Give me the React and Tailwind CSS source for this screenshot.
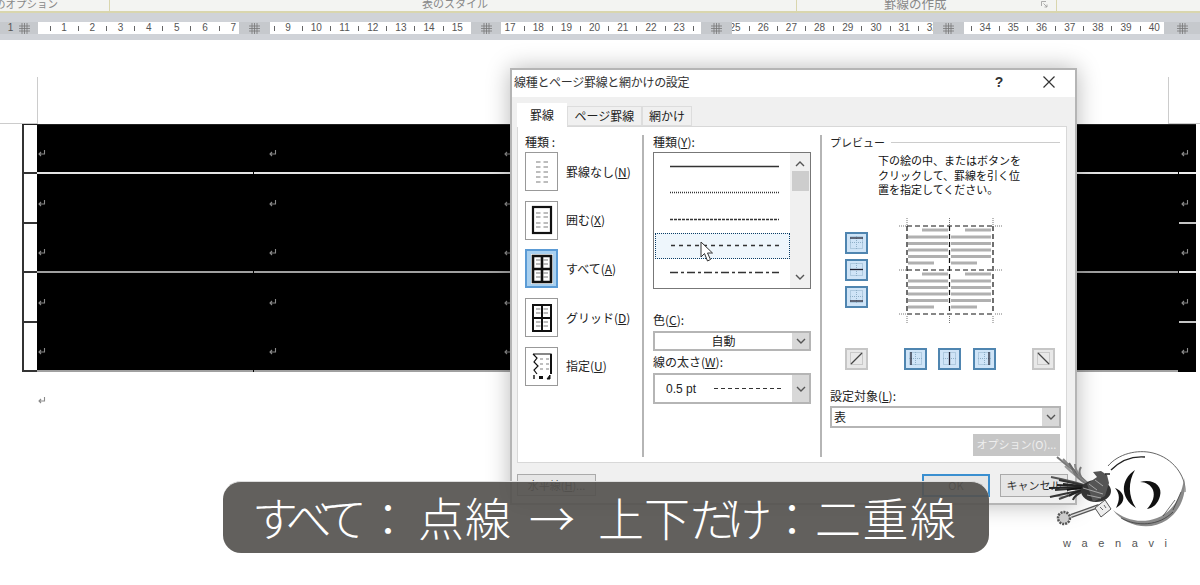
// Word の線種とページ罫線ダイアログの画面
const JP = "font-['Noto_Sans_CJK_JP','Noto_Sans',sans-serif]";

// ruler segments: "" is a tick, pad is where the first item starts
const rulerParts = [
  { gray: true, cls: "w-[38px]", items: ["1"] },
  { cls: "w-[201px]", pad: "ml-[5px]", items: ["", "1", "", "2", "", "3", "", "4", "", "5", "", "6", "", "7"] },
  { gray: true, cls: "w-[31px]", items: [] },
  { cls: "w-[201px]", pad: "-ml-[3px]", items: ["", "9", "", "10", "", "11", "", "12", "", "13", "", "14", "", "15", ""] },
  { gray: true, cls: "w-[30px]", items: [] },
  { cls: "w-[200px]", pad: "ml-[2px]", items: ["17", "", "18", "", "19", "", "20", "", "21", "", "22", "", "23", ""] },
  { gray: true, cls: "w-[31px]", items: [] },
  { cls: "w-[201px]", pad: "-ml-[4px]", items: ["25", "", "26", "", "27", "", "28", "", "29", "", "30", "", "31", "", "32"] },
  { gray: true, cls: "w-[31px]", items: [] },
  { cls: "w-[200px]", pad: "ml-0", items: ["", "34", "", "35", "", "36", "", "37", "", "38", "", "39", "", "40"] },
  { gray: true, cls: "flex-1", items: [""] },
];

function GridMark() {
  return (
    <svg width="11" height="11" viewBox="0 0 11 11" fill="none" className="shrink-0">
      <path d="M3 0v11M5.5 0v11M8 0v11M0 3h11M0 5.5h11M0 8h11" stroke="#777" strokeWidth="0.8" />
    </svg>
  );
}

function Ribbon() {
  return (
    <div className="h-[40px] bg-[#d0d3d8]">
      <div className={`flex h-[13px] overflow-hidden border-b-2 border-[#d9d6ae] bg-[#f3f4f2] text-[11px] leading-[7px] text-[#888] ${JP}`}>
        <div className="w-[110px] overflow-hidden whitespace-nowrap border-r border-[#d9d6ae]">
          <div className="-ml-[5px] text-[10.5px]">のオプション</div>
        </div>
        <div className="w-[687px] border-r border-[#d9d6ae] pl-[4px] text-center">表のスタイル</div>
        <div className="flex w-[260px] border-r border-[#d9d6ae]">
          <span className="ml-[87px] flex-1 text-[12.5px]">罫線の作成</span>
          <svg width="7" height="7" viewBox="0 0 7 7" fill="none" className="mr-[8px] mt-px">
            <path d="M0.5 5V0.5H5M2.5 2.5L6 6M6 3.5V6H3.5" stroke="#999" strokeWidth="0.8" />
          </svg>
        </div>
        <div className="flex-1" />
      </div>
      <div className="mt-[9px] flex h-[12px] font-['Liberation_Sans',sans-serif] text-[10px] leading-[12px] text-[#555]">
        {rulerParts.map((part, i) =>
          part.gray ? (
            <div key={i} className={`flex items-center justify-center gap-[6px] bg-[#c6c9cd] ${part.cls}`}>
              {part.items[0] && <span>{part.items[0]}</span>}
              <GridMark />
            </div>
          ) : (
            <div key={i} className={`flex items-center overflow-hidden bg-white ${part.cls}`}>
              <div className={`flex items-center ${part.pad}`}>
                {part.items.map((t, j) => (
                  <span key={j} className="flex w-[14.1px] shrink-0 items-center justify-center">
                    {t === "" ? <span className="h-[5px] w-px bg-[#666]" /> : t}
                  </span>
                ))}
              </div>
            </div>
          ),
        )}
      </div>
    </div>
  );
}

function Ret({ className = "" }) {
  return (
    <svg width="9" height="9" viewBox="0 0 9 9" fill="none" className={`shrink-0 ${className}`}>
      <path d="M7.5 1v4H2M4 3L2 5l2 2" stroke="#8a8a8a" strokeWidth="1.1" />
    </svg>
  );
}

const tableRows = [
  { line: "border-b-[#e4e4e4]", end: "border-b-[#eeeeee]" },
  { line: "border-b-black", end: "border-b-[#c4c4c4]" },
  { line: "border-b-[#a0a0a0]", end: "border-b-[#e4e4e4]" },
  { line: "border-b-black", end: "border-b-[#c4c4c4]" },
  { line: "border-b-[#a0a0a0]", end: "border-b-black" },
];

function Table() {
  return (
    <div className="ml-[22px] flex w-[1174px] flex-col border-t border-[#222]">
      {tableRows.map((r, i) => (
        <div key={i} className="flex h-[49.4px]">
          <div className="w-[15px] border-b-2 border-l-2 border-[#333] bg-white" />
          <div className="flex flex-1 bg-black">
            <div className={`flex w-[216px] items-end border-b-2 pb-[14px] ${r.line}`}>
              <Ret />
            </div>
            <div className={`ml-px flex flex-1 items-end border-b-2 pb-[14px] pl-[14px] ${r.line}`}>
              <Ret />
              <Ret className="ml-[226px]" />
            </div>
            <div className={`ml-px flex w-[17px] items-end border-b-2 pb-[14px] pl-px ${r.end}`}>
              <Ret />
            </div>
          </div>
        </div>
      ))}
    </div>
  );
}

function Dashes({ rows }) {
  return rows.map((y) => <path key={y} d={`M5 ${y}h4.5M12.5 ${y}h4.5`} stroke="#a8a8a8" strokeWidth="1.5" />);
}

function BorderIcon({ kind, selected }) {
  return (
    <div className={`flex h-[39px] w-[33px] items-center justify-center ${selected ? "border-2 border-[#5b9bd5] bg-[#a9d0ef]" : "border border-[#999] bg-white"}`}>
      <svg width="22" height="30" viewBox="0 0 22 30" fill="none" className={selected ? "bg-white" : ""}>
        {kind == "none" && <Dashes rows={[5, 10, 15, 20, 25]} />}
        {kind == "box" && (
          <>
            <Dashes rows={[8, 12, 18, 22]} />
            <rect x="2" y="2" width="18" height="26" stroke="#111" strokeWidth="2.2" />
          </>
        )}
        {(kind == "all" || kind == "grid") && (
          <>
            <Dashes rows={[6, 10, 19, 23]} />
            <path d="M2 2h18v26H2zM11 2v26M2 15h18" stroke="#111" strokeWidth={kind == "all" ? 2.6 : 2} />
          </>
        )}
        {kind == "custom" && (
          <>
            <path d="M9 8h3M15 8h3M9 13h3M15 13h3M9 18h3M15 18h3" stroke="#aaa" strokeWidth="1.4" />
            <path d="M2 3h18v20M2 3l4 4-3 4 4 4-4 4 3 4" stroke="#111" strokeWidth="1.2" />
            <path d="M20 3v20" stroke="#111" strokeWidth="2" />
            <path d="M3 24v4" stroke="#111" strokeWidth="1.4" />
            <rect x="8" y="25" width="4" height="3" fill="#111" />
            <path d="M16 28l3-4v4z" fill="#111" stroke="#111" />
          </>
        )}
      </svg>
    </div>
  );
}

function Preset({ kind, label, u, selected }) {
  return (
    <div className="flex items-center gap-[8px]">
      <BorderIcon kind={kind} selected={selected} />
      <span className="text-[12px] leading-none text-[#222]">
        {label}(<span className="underline">{u}</span>)
      </span>
    </div>
  );
}

function LineSample({ dash, selected, width = 1.4 }) {
  return (
    <div className={`flex h-[26.5px] items-center pl-[15px] ${selected ? "border border-dotted border-[#0a3d66] bg-[#eef6fc] pl-[14px]" : ""}`}>
      <svg width="109" height="3">
        <line x1="0" y1="1.5" x2="109" y2="1.5" stroke="#333" strokeWidth={width} strokeDasharray={dash} />
      </svg>
    </div>
  );
}

function Chevron({ up }) {
  return (
    <svg width="10" height="6" viewBox="0 0 10 6" fill="none" className={up ? "rotate-180" : ""}>
      <path d="M1 1l4 4 4-4" stroke="#555" strokeWidth="1.4" />
    </svg>
  );
}

function Select({ children, className, center }) {
  return (
    <div className={`flex border-2 border-[#b5b5b5] bg-white ${className}`}>
      <div className={`flex flex-1 items-center text-[12px] text-[#222] ${center ? "justify-center" : ""}`}>{children}</div>
      <div className="flex w-[17px] items-center justify-center bg-[#d8d8d8]"><Chevron /></div>
    </div>
  );
}

function SideBtn({ d }) {
  return (
    <div className="flex h-[22px] w-[23px] items-center justify-center border-2 border-[#4f85b0] bg-[#cfe4f7]">
      <svg width="15" height="15" viewBox="0 0 15 15" fill="none">
        <rect x="1.5" y="1.5" width="12" height="12" stroke="#8fb0c8" strokeWidth="1" strokeDasharray="1 1" />
        <path d="M7.5 1v13M1 7.5h13" stroke="#8fb0c8" strokeWidth="1" strokeDasharray="1 1" />
        <path d={d} stroke="#223" strokeWidth="1.3" />
      </svg>
    </div>
  );
}

function DiagBtn({ d }) {
  return (
    <div className="flex h-[22px] w-[23px] items-center justify-center border-2 border-[#c6c6c6] bg-[#e8e8e8]">
      <svg width="15" height="15" viewBox="0 0 15 15" fill="none">
        <rect x="1.5" y="1.5" width="12" height="12" stroke="#aaa" strokeWidth="1" strokeDasharray="1 1" />
        <path d={d} stroke="#444" strokeWidth="1.2" />
      </svg>
    </div>
  );
}

// プレビューの図
function Preview() {
  const bars = (x) => (
    <path
      d={`M${x + 14} 3h26M${x} 10h40M${x} 16.5h40M${x} 23h40M${x} 29.5h40M${x} 36h26`}
      stroke="#b0b0b0"
      strokeWidth="3"
    />
  );
  return (
    <svg width="104" height="108" viewBox="0 0 104 108" fill="none">
      <g transform="translate(9,9)">
        {bars(0)}
        {bars(43)}
        <g transform="translate(0,44)">
          {bars(0)}
          {bars(43)}
        </g>
      </g>
      <path d="M8 8h86M8 52h86M8 96h86M8 8v88M50.5 8v88M94 8v88" stroke="#111" strokeWidth="1.2" strokeDasharray="5 3" />
      <path d="M0 8h7M96 8h7M0 52h7M96 52h7M0 96h7M96 96h7M8 0v7M50.5 0v7M94 0v7M8 98v7M50.5 98v7M94 98v7" stroke="#777" strokeWidth="1" strokeDasharray="1 1" />
    </svg>
  );
}

function Cursor() {
  return (
    <svg width="13" height="21" viewBox="0 0 13 21" className="absolute left-[700px] top-[241px] z-10">
      <path d="M1 1v15l3.5-3.5L7.5 20l3-1.5-3-6.5h5z" fill="#fff" stroke="#333" strokeWidth="1" />
    </svg>
  );
}

function Dialog() {
  return (
    <div className={`absolute left-[510px] top-[68px] flex h-[437px] w-[567px] flex-col border-2 border-[#b5b5b5] bg-[#f0f0f0] shadow-[0_0_22px_rgba(0,0,0,0.28)] ${JP}`}>
      <div className="flex h-[27px] items-center bg-white pb-[3px] pl-[2px] pr-[20px] text-[12px] tracking-[-0.3px] text-[#333]">
        <span className="flex-1">線種とページ罫線と網かけの設定</span>
        <span className="mr-[40px] font-['Liberation_Sans',sans-serif] text-[14px] font-bold">?</span>
        <svg width="12" height="12" viewBox="0 0 12 12" fill="none"><path d="M0.5 0.5l11 11M11.5 0.5l-11 11" stroke="#333" strokeWidth="1.2" /></svg>
      </div>
      <div className="flex pl-[5px] pt-[6px] text-[12px] leading-none text-[#222]">
        <div className="relative z-10 -mb-px flex h-[24px] w-[50px] items-center justify-center bg-white">罫線</div>
        <div className="mt-[3px] flex h-[20px] w-[75px] items-center justify-center border border-[#ddd]">ページ罫線</div>
        <div className="mt-[3px] flex h-[20px] w-[50px] items-center justify-center border border-[#ddd]">網かけ</div>
      </div>
      <div className="ml-[5px] flex h-[337px] w-[550px] border border-[#d8d8d8] bg-white">
        {/* 左の列 */}
        <div className="flex w-[124px] flex-col pl-[7px] pt-[8px]">
          <span className="mb-[4px] text-[12px] leading-[13px] text-[#222]">種類 :</span>
          <div className="flex flex-col gap-[9.7px]">
            <Preset kind="none" label="罫線なし" u="N" />
            <Preset kind="box" label="囲む" u="X" />
            <Preset kind="all" label="すべて" u="A" selected />
            <Preset kind="grid" label="グリッド" u="D" />
            <Preset kind="custom" label="指定" u="U" />
          </div>
        </div>
        {/* 中央の列 */}
        <div className="mt-[8px] flex h-[322px] w-[178px] flex-col border-l-2 border-[#b5b5b5] pl-[9px] pr-[9px]">
          <span className="mb-[3px] text-[12px] leading-[14px] text-[#222]">種類(<span className="underline">Y</span>):</span>
          <div className="flex h-[137px] border border-[#777]">
            <div className="flex-1 pl-px">
              <LineSample />
              <LineSample dash="1 1" />
              <LineSample dash="3 1" />
              <LineSample dash="4 4" selected />
              <LineSample dash="8 3 3 3" />
            </div>
            <div className="flex w-[20px] flex-col items-center bg-[#f0f0f0]">
              <div className="mt-[8px]"><Chevron up /></div>
              <div className="mt-[4px] h-[20px] w-[17px] bg-[#cdcdcd]" />
              <div className="mt-auto mb-[8px]"><Chevron /></div>
            </div>
          </div>
          <span className="mt-[24px] text-[12px] leading-[14px] text-[#222]">色(<span className="underline">C</span>):</span>
          <Select className="mt-[4px] h-[20px]" center>自動</Select>
          <span className="mt-[4px] text-[12px] leading-[14px] text-[#222]">線の太さ(<span className="underline">W</span>):</span>
          <Select className="mt-[4px] h-[31px]">
            <span className="ml-[11px] w-[48px] font-['Liberation_Sans',sans-serif]">0.5 pt</span>
            <svg width="68" height="3"><line x1="0" y1="1.5" x2="68" y2="1.5" stroke="#333" strokeDasharray="4 3" /></svg>
          </Select>
        </div>
        {/* プレビュー */}
        <div className="mt-[8px] flex h-[322px] w-[246px] flex-col border-l-2 border-[#b5b5b5] pl-[8px]">
          <div className="flex items-center gap-[6px]">
            <span className="text-[11px] leading-[14px] text-[#222]">プレビュー</span>
            <div className="mr-[6px] h-px flex-1 bg-[#ccc]" />
          </div>
          <p className="ml-[48px] mt-[4px] text-[11px] leading-[14.5px] text-[#111]">下の絵の中、またはボタンを<br />クリックして、罫線を引く位<br />置を指定してください。</p>
          <div className="mt-[21px] flex h-[108px]">
            <div className="ml-[15px] mt-[14px] flex flex-col gap-[5px]">
              <SideBtn d="M1 3h13" />
              <SideBtn d="M1 7.5h13" />
              <SideBtn d="M1 12h13" />
            </div>
            <div className="ml-[31px]"><Preview /></div>
          </div>
          <div className="mt-[22px] flex items-center">
            <div className="ml-[15px]"><DiagBtn d="M2 13L13 2" /></div>
            <div className="ml-[36px]"><SideBtn d="M3 1v13" /></div>
            <div className="ml-[11px]"><SideBtn d="M7.5 1v13" /></div>
            <div className="ml-[12px]"><SideBtn d="M12 1v13" /></div>
            <div className="ml-[36px]"><DiagBtn d="M2 2l11 11" /></div>
          </div>
          <span className="mt-[19px] text-[12px] leading-[14px] text-[#222]">設定対象(<span className="underline">L</span>):</span>
          <Select className="mt-[3px] h-[22px] w-[231px]"><span className="ml-[2px]">表</span></Select>
          <div className="ml-[143px] mt-[6px] flex h-[22px] w-[87px] items-center justify-center bg-[#c6c6c6] text-[11px] text-[#eee]">オプション(O)...</div>
        </div>
      </div>
      <div className="flex items-start pl-[5px] pt-[11px] text-[11px] leading-none text-[#333]">
        <div className="flex h-[22px] w-[79px] items-center justify-center border border-[#aaa] bg-[#e6e6e6]">水平線(<span className="underline">H</span>)...</div>
        <div className="ml-[326px] flex h-[23px] w-[68px] items-center justify-center border-2 border-[#3a8fd0] bg-[#e6e6e6]">OK</div>
        <div className="ml-[10px] flex h-[23px] w-[68px] items-center justify-center border border-[#aaa] bg-[#e6e6e6]">キャンセル</div>
      </div>
    </div>
  );
}

// feather tips of the wing and the tail
const feathers = [
  [12, 7, "#777"], [18, 9, "#888"], [24, 13, "#666"], [30, 14, "#888"], [36, 17, "#777"], [20, 16, "#999"], [28, 20, "#777"],
  [6, 27, "#555"], [14, 30, "#333"], [4, 38, "#222"], [10, 40, "#333"], [5, 47, "#333"], [18, 34, "#222"],
  [14, 49, "#444"], [24, 46, "#222"], [12, 35, "#222"], [22, 40, "#111"], [28, 50, "#333"],
];

function Logo() {
  return (
    <div className="absolute left-[1045px] top-[450px] z-20 flex w-[145px] flex-col">
      <svg width="145" height="84" viewBox="0 0 145 84" fill="none">
        {/* 鳥 */}
        {feathers.map(([x, y, c], i) => (
          <path key={i} d={`M${x} ${y}Q30 ${(y + 36) / 2} 48 38`} stroke={c} strokeWidth="2" />
        ))}
        <ellipse cx="51" cy="41" rx="15" ry="11" fill="#333" />
        <path d="M42 34L52 27L48 22L56 21L62 25L64 33L60 46L48 52Z" fill="#555" />
        <path d="M38 38L58 44M42 45L56 48M50 30L58 36M44 34L52 40" stroke="#bbb" strokeWidth="0.8" />
        <path d="M60 24l5 0" stroke="#222" strokeWidth="1.5" />
        {/* 鍵 */}
        <path d="M26 66L54 56" stroke="#555" strokeWidth="4" />
        <path d="M26 66L54 56" stroke="#ddd" strokeWidth="1.4" />
        <path d="M50 58l10-8l6 9l-10 8z" fill="#eee" stroke="#555" />
        <path d="M55 57l3 3M59 55l2 3" stroke="#666" />
        <circle cx="19" cy="68" r="6" fill="#ccc" stroke="#555" strokeWidth="2.5" strokeDasharray="2 1" />
        {/* 輪 */}
        <path d="M63 16C73 4 92 -1 108 3C128 8 141 26 140 42" stroke="#555" strokeWidth="0.9" />
        <path d="M66 20C76 10 88 6 100 7" stroke="#222" strokeWidth="1.4" />
        <path d="M68 60C80 76 104 82 122 70C136 60 142 44 139 28C137 46 128 62 112 68C96 74 80 70 68 60Z" fill="#8a8a8a" />
        <path d="M76 68C92 77 114 76 128 62M118 66L130 50M128 60L136 42" stroke="#333" strokeWidth="0.7" />
        {/* 波 */}
        <path d="M70 38C80 42 82 52 71 58C75 50 75 44 70 38Z" fill="#111" />
        <path d="M90 20C75 30 75 48 91 58C83 46 83 32 90 20Z" fill="#111" />
        <path d="M95 32C108 28 118 36 115 46C113 54 108 58 102 59C108 52 110 46 108 40C106 35 101 32 95 32Z" fill="#111" />
      </svg>
      <div className="ml-[18px] mt-[4px] flex w-[104px] justify-between font-['Liberation_Sans',sans-serif] text-[11px] leading-none text-[#555]">
        {["w", "a", "e", "n", "a", "v", "i"].map((c, i) => (
          <span key={i}>{c}</span>
        ))}
      </div>
    </div>
  );
}

export default function App() {
  return (
    <div className="relative h-[585px] w-[1200px] overflow-hidden bg-white">
      <Ribbon />
      <div className="pt-[37px]">
        {/* 余白の目印 */}
        <div className="flex h-[47px]">
          <div className="w-[38px] border-b border-r border-[#ccc]" />
          <div className="flex-1" />
          <div className="w-[32px] border-b border-l border-[#ccc]" />
        </div>
        <Table />
        <div className="ml-[37px] mt-[24px]"><Ret /></div>
      </div>
      <Dialog />
      <Cursor />
      {/* テロップ: かなは字間を詰める */}
      <div className={`absolute left-[223px] top-[481px] z-10 flex h-[72px] w-[766px] items-center whitespace-nowrap rounded-[18px] border-t border-[#ddd] bg-[#55534f]/[0.92] pb-[4px] pl-[29px] text-[46px] font-light leading-none text-white ${JP}`}>
        <span className="tracking-[-9px]">すべて</span>
        <span className="ml-[7px] mr-[7px]">：</span>
        <span className="tracking-[1px]">点線</span>
        <span className="ml-[17px]">→</span>
        <span className="ml-[23px]">上下</span>
        <span className="tracking-[-10px]">だけ</span>
        <span className="ml-[7px]">：</span>
        <span className="tracking-[1.5px]">二重線</span>
      </div>
      <Logo />
    </div>
  );
}
